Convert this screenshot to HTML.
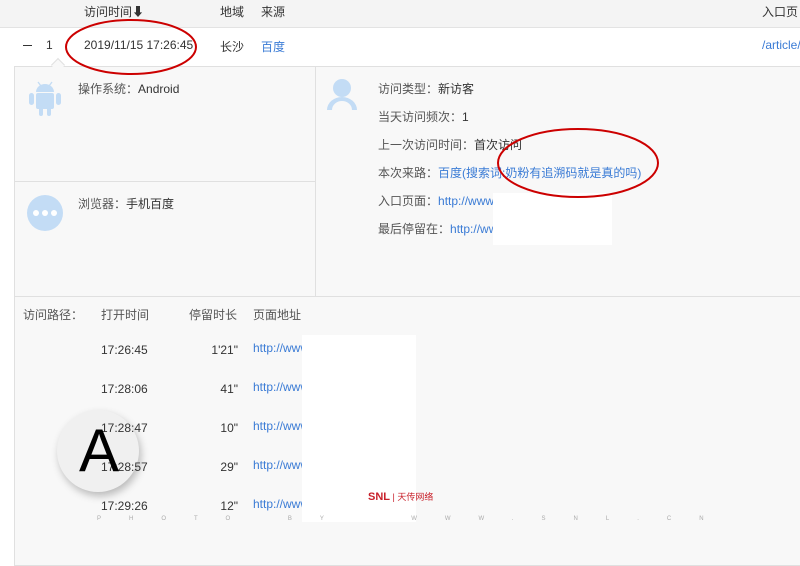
<!DOCTYPE html>
<html><head><meta charset="utf-8"><style>
*{margin:0;padding:0;box-sizing:border-box}
body{width:800px;height:533px;overflow:hidden;background:#fff;font-family:"Liberation Sans","Noto Sans CJK SC",sans-serif;font-size:12px;color:#333;position:relative}
.a{position:absolute;white-space:nowrap}
.b{color:#3a7bd5}
.g{color:#555}
</style></head><body>
<div class="a" style="left:0;top:0;width:800px;height:28px;background:#f4f4f4;border-bottom:1px solid #e3e3e3"></div>
<div class="a" style="left:84px;top:3px">访问时间⬇</div>
<div class="a" style="left:220px;top:3px">地域</div>
<div class="a" style="left:261px;top:3px">来源</div>
<div class="a" style="left:762px;top:3px">入口页</div>
<div class="a" style="left:23px;top:45px;width:9px;height:1px;background:#333"></div>
<div class="a" style="left:46px;top:38px">1</div>
<div class="a" style="left:84px;top:38px">2019/11/15 17:26:45</div>
<div class="a" style="left:220px;top:38px">长沙</div>
<div class="a b" style="left:261px;top:38px">百度</div>
<div class="a b" style="left:762px;top:38px">/article/</div>
<!-- panel -->
<div class="a" style="left:14px;top:66px;width:800px;height:500px;background:#f8f8f8;border:1px solid #e0e0e0"></div>
<div class="a" style="left:53px;top:60px;width:10px;height:10px;background:#f8f8f8;border-left:1px solid #e0e0e0;border-top:1px solid #e0e0e0;transform:rotate(45deg)"></div>
<div class="a" style="left:315px;top:67px;width:1px;height:229px;background:#e0e0e0"></div>
<div class="a" style="left:15px;top:181px;width:300px;height:1px;background:#e0e0e0"></div>
<div class="a" style="left:15px;top:296px;width:785px;height:1px;background:#e0e0e0"></div>
<!-- android -->
<svg class="a" style="left:28px;top:80px" width="34" height="36" viewBox="0 0 34 36"><g fill="#c3dcf5"><path d="M8 12a9 8 0 0 1 18 0z"/><rect x="8" y="13" width="18" height="16" rx="2"/><rect x="1" y="13" width="5" height="12" rx="2.5"/><rect x="28" y="13" width="5" height="12" rx="2.5"/><rect x="11" y="27" width="4" height="9" rx="2"/><rect x="19" y="27" width="4" height="9" rx="2"/><path d="M10 2l3 4M24 2l-3 4" stroke="#c3dcf5" stroke-width="1.3"/></g></svg>
<div class="a" style="left:78px;top:80px"><span class="g">操作系统：</span>Android</div>
<svg class="a" style="left:26px;top:194px" width="38" height="38"><circle cx="19" cy="19" r="18" fill="#c3dcf5"/><circle cx="10" cy="19" r="3" fill="#fff"/><circle cx="19" cy="19" r="3" fill="#fff"/><circle cx="28" cy="19" r="3" fill="#fff"/></svg>
<div class="a" style="left:78px;top:195px"><span class="g">浏览器：</span>手机百度</div>
<svg class="a" style="left:326px;top:78px" width="32" height="32"><circle cx="16" cy="10" r="9" fill="#c3dcf5"/><path d="M1 32a15 13 0 0 1 30 0h-5a10 9 0 0 0-20 0z" fill="#c3dcf5"/></svg>
<div class="a" style="left:378px;top:80px"><span class="g">访问类型：</span>新访客</div>
<div class="a" style="left:378px;top:108px"><span class="g">当天访问频次：</span>1</div>
<div class="a" style="left:378px;top:136px"><span class="g">上一次访问时间：</span>首次访问</div>
<div class="a" style="left:378px;top:164px"><span class="g">本次来路：</span><span class="b">百度(搜索词:奶粉有追溯码就是真的吗)</span></div>
<div class="a" style="left:378px;top:192px"><span class="g">入口页面：</span><span class="b">http://www</span></div>
<div class="a" style="left:378px;top:220px"><span class="g">最后停留在：</span><span class="b">http://ww</span></div>
<div class="a" style="left:493px;top:193px;width:119px;height:52px;background:#fff"></div>
<!-- A circle (behind text) -->
<div class="a" style="left:57px;top:410px;width:82px;height:82px;border-radius:50%;background:#f0f0f0;box-shadow:2px 4px 8px rgba(0,0,0,.25)"></div>
<!-- path -->
<div class="a g" style="left:23px;top:306px">访问路径：</div>
<div class="a g" style="left:101px;top:306px">打开时间</div>
<div class="a g" style="left:189px;top:306px">停留时长</div>
<div class="a g" style="left:253px;top:306px">页面地址</div>
<div class="a" style="left:101px;top:343px">17:26:45</div><div class="a" style="left:190px;width:48px;text-align:right;top:343px">1'21"</div><div class="a b" style="left:253px;top:341px">http://www</div>
<div class="a" style="left:101px;top:382px">17:28:06</div><div class="a" style="left:190px;width:48px;text-align:right;top:382px">41"</div><div class="a b" style="left:253px;top:380px">http://www</div>
<div class="a" style="left:101px;top:421px">17:28:47</div><div class="a" style="left:190px;width:48px;text-align:right;top:421px">10"</div><div class="a b" style="left:253px;top:419px">http://www</div>
<div class="a" style="left:101px;top:460px">17:28:57</div><div class="a" style="left:190px;width:48px;text-align:right;top:460px">29"</div><div class="a b" style="left:253px;top:458px">http://www</div>
<div class="a" style="left:101px;top:499px">17:29:26</div><div class="a" style="left:190px;width:48px;text-align:right;top:499px">12"</div><div class="a b" style="left:253px;top:497px">http://www</div>
<div class="a" style="left:302px;top:335px;width:114px;height:187px;background:#fff"></div>
<div class="a" style="left:368px;top:490px;font-size:11px;font-weight:bold;color:#c8202a">SNL<span style="font-size:9px;font-weight:normal"> | 天传网络</span></div>
<div class="a" style="left:97px;top:516px;font-size:6px;color:#aaa;letter-spacing:28px">PHOTO&nbsp;BY&nbsp;&nbsp;WWW.SNL.CN</div>
<div class="a" style="left:79px;top:418px;font-size:60px;color:#000;line-height:66px">A</div>
<!-- red ellipses -->
<svg class="a" style="left:0;top:0" width="800" height="533"><ellipse cx="131" cy="47" rx="65" ry="27" fill="none" stroke="#c00" stroke-width="2"/><ellipse cx="578" cy="163" rx="80" ry="34" fill="none" stroke="#c00" stroke-width="2"/></svg>
</body></html>
